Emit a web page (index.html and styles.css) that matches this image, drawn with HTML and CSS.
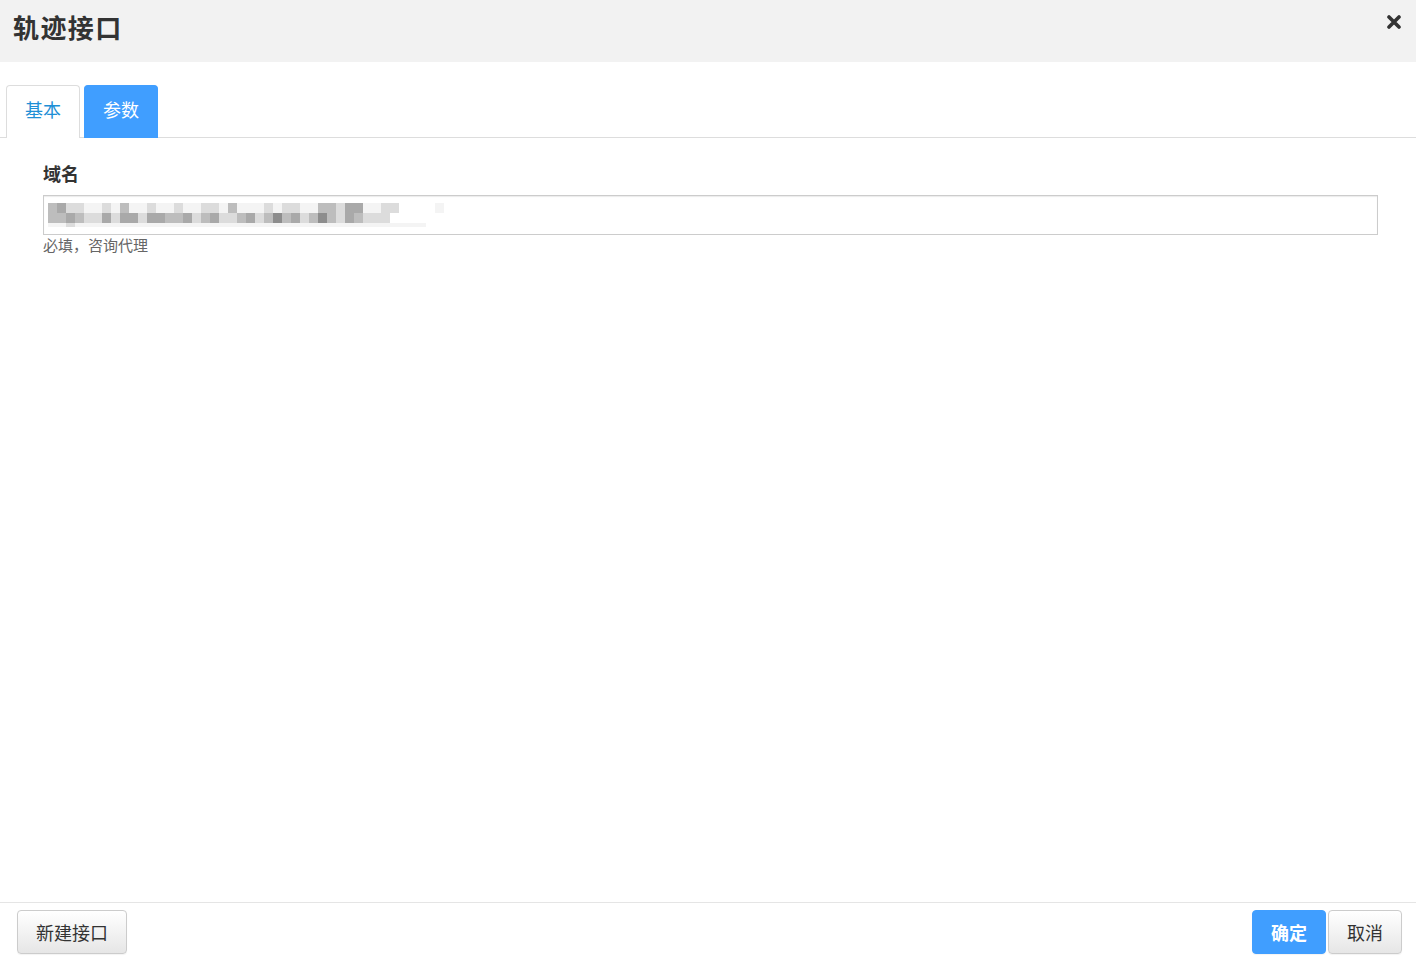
FILE: index.html
```html
<!DOCTYPE html>
<html lang="zh">
<head>
<meta charset="utf-8">
<title>轨迹接口</title>
<link rel="stylesheet" href="styles.css">
</head>
<body>
<div class="dialog">
  <header class="dlg-head">
    <h1 class="dlg-title">轨迹接口</h1>
    <button class="dlg-close" aria-label="关闭">
      <svg width="14" height="14" viewBox="0 0 14 14"><path d="M2 2 L12 12 M12 2 L2 12" stroke="#333" stroke-width="3.6" stroke-linecap="round"/></svg>
    </button>
  </header>
  <div class="dlg-body">
    <nav class="tabs">
      <a class="tab">基本</a>
      <a class="tab active">参数</a>
    </nav>
    <div class="form">
      <label class="field-label">域名</label>
      <div class="input">
        <div class="mosaic">
          <div class="mrow">
            <span class="c2"></span><span class="c3"></span><span class="c1"></span><span class="c1"></span><span class="c0"></span><span class="c0"></span><span class="c1"></span><span class="c0"></span><span class="c2"></span><span class="c0"></span><span class="c0"></span><span class="c1"></span><span class="c0"></span><span class="c0"></span><span class="c1"></span><span class="c0"></span><span class="c0"></span><span class="c1"></span><span class="c1"></span><span class="c0"></span><span class="c2"></span><span class="c0"></span><span class="c0"></span><span class="c0"></span><span class="c1"></span><span class="c0"></span><span class="c1"></span><span class="c1"></span><span class="c0"></span><span class="c0"></span><span class="c2"></span><span class="c2"></span><span class="c1"></span><span class="c3"></span><span class="c3"></span><span class="c0"></span><span class="c0"></span><span class="c1"></span><span class="c1"></span><span class="cw"></span><span class="cw"></span><span class="cw"></span><span class="cw"></span><span class="c0"></span>
          </div>
          <div class="mrow">
            <span class="c2"></span><span class="c2"></span><span class="c3"></span><span class="c2"></span><span class="c1"></span><span class="c1"></span><span class="c3"></span><span class="c1"></span><span class="c3"></span><span class="c3"></span><span class="c1"></span><span class="c3"></span><span class="c3"></span><span class="c2"></span><span class="c2"></span><span class="c3"></span><span class="c1"></span><span class="c2"></span><span class="c3"></span><span class="c1"></span><span class="c1"></span><span class="c2"></span><span class="c3"></span><span class="c1"></span><span class="c2"></span><span class="c4"></span><span class="c2"></span><span class="c3"></span><span class="c1"></span><span class="c2"></span><span class="c4"></span><span class="c2"></span><span class="c1"></span><span class="c3"></span><span class="c2"></span><span class="c1"></span><span class="c1"></span><span class="c1"></span><span class="cw"></span><span class="cw"></span><span class="cw"></span><span class="cw"></span><span class="cw"></span><span class="cw"></span>
          </div>
          <div class="mrow thin">
            <span class="c0"></span><span class="c0"></span><span class="c1"></span><span class="c0"></span><span class="c0"></span><span class="c0"></span><span class="c0"></span><span class="c0"></span><span class="c0"></span><span class="c0"></span><span class="c0"></span><span class="c0"></span><span class="c0"></span><span class="c0"></span><span class="c0"></span><span class="c0"></span><span class="c0"></span><span class="c0"></span><span class="c0"></span><span class="c0"></span><span class="c0"></span><span class="c0"></span><span class="c0"></span><span class="c0"></span><span class="c0"></span><span class="c0"></span><span class="c0"></span><span class="c0"></span><span class="c0"></span><span class="c0"></span><span class="c0"></span><span class="c0"></span><span class="c0"></span><span class="c0"></span><span class="c0"></span><span class="c0"></span><span class="c0"></span><span class="c0"></span><span class="c0"></span><span class="c0"></span><span class="c0"></span><span class="c0"></span>
          </div>
        </div>
      </div>
      <p class="help">必填，咨询代理</p>
    </div>
  </div>
  <footer class="dlg-foot">
    <button class="btn">新建接口</button>
    <div class="foot-right">
      <button class="btn btn-primary">确定</button>
      <button class="btn">取消</button>
    </div>
  </footer>
</div>
</body>
</html>
```

FILE: styles.css
```css
* { box-sizing: border-box; }
html, body {
  margin: 0;
  padding: 0;
  height: 100%;
  background: #fff;
  font-family: "Microsoft YaHei", "Noto Sans CJK SC", "Liberation Sans", sans-serif;
  color: #333;
}
.dialog {
  height: 963px;
  display: flex;
  flex-direction: column;
}
.dlg-head {
  height: 62px;
  background: #f2f2f2;
  display: flex;
  align-items: flex-start;
  justify-content: space-between;
  padding: 14px 15px 0 13px;
}
.dlg-title {
  margin: 0;
  font-size: 26px;
  font-weight: 700;
  color: #333;
  line-height: 26px;
  letter-spacing: 1.4px;
}
.dlg-close {
  border: 0;
  background: transparent;
  padding: 0;
  width: 14px;
  height: 14px;
  cursor: pointer;
  display: flex;
  margin-top: 1px;
}
.dlg-body {
  flex: 1;
  padding-top: 23px;
}
.tabs {
  display: flex;
  gap: 4px;
  padding-left: 6px;
  border-bottom: 1px solid #ddd;
  height: 53px;
}
.tab {
  width: 74px;
  height: 53px;
  display: flex;
  align-items: center;
  justify-content: center;
  font-size: 18px;
  color: #1e8fd6;
  border: 1px solid #ddd;
  border-bottom: 0;
  border-radius: 4px 4px 0 0;
  background: #fff;
  padding-bottom: 6px;
}
.tab.active {
  background: #409eff;
  border-color: #409eff;
  color: #fff;
}
.form {
  padding: 22px 38px 0 43px;
}
.field-label {
  display: block;
  font-size: 18px;
  font-weight: 700;
  color: #333;
  line-height: 26px;
  height: 26px;
}
.input {
  margin-top: 9px;
  height: 40px;
  border: 1px solid #ccc;
  box-shadow: inset 0 1px 1px rgba(0,0,0,0.08);
  background: #fff;
  padding: 7px 0 0 4px;
  overflow: hidden;
}
.mosaic {
  display: flex;
  flex-direction: column;
}
.mrow {
  display: flex;
  height: 10px;
}
.mrow.thin { height: 4px; }
.mrow span {
  width: 9px;
  height: 100%;
  flex: none;
}
.cw { background: #fff; }
.c0 { background: #f4f4f4; }
.c1 { background: #dcdcdc; }
.c2 { background: #bdbdbd; }
.c3 { background: #a9a9a9; }
.c4 { background: #8d8d8d; }
.help {
  margin: 0;
  font-size: 15px;
  color: #666;
  line-height: 20px;
}
.dlg-foot {
  height: 61px;
  border-top: 1px solid #e5e5e5;
  display: flex;
  align-items: flex-start;
  justify-content: space-between;
  padding: 7px 14px 0 17px;
}
.foot-right {
  display: flex;
  gap: 2px;
}
.btn {
  height: 44px;
  padding: 0 18px;
  font-family: inherit;
  font-size: 18px;
  color: #333;
  border: 1px solid #ccc;
  border-radius: 4px;
  background: linear-gradient(#fff, #e6e6e6);
  box-shadow: 0 1px 1px rgba(0,0,0,0.05);
  cursor: pointer;
}
.btn-primary {
  background: #409eff;
  border-color: #409eff;
  color: #fff;
  font-weight: 700;
}
```
